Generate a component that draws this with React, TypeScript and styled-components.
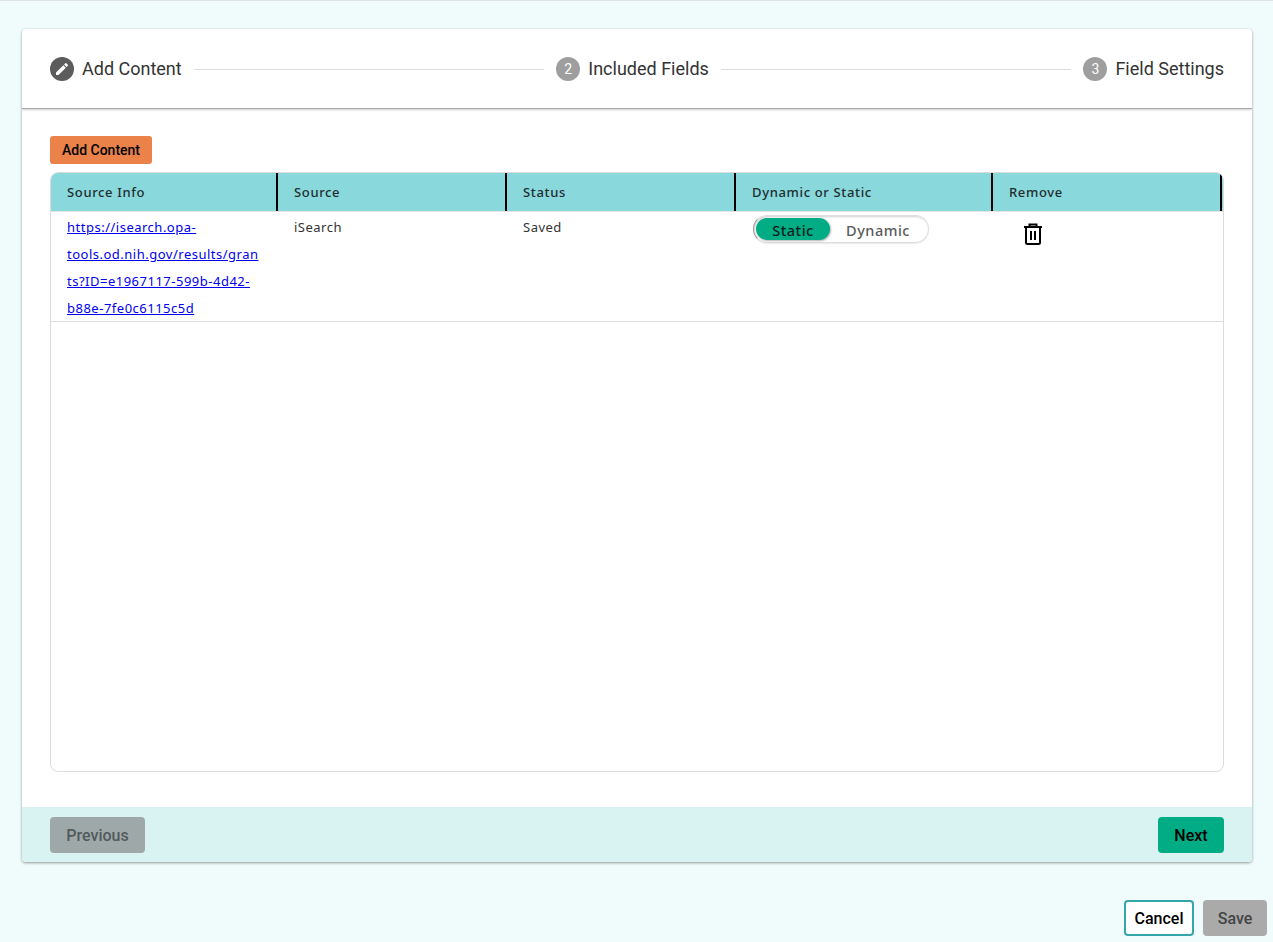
import React from "react";
import styled, { createGlobalStyle } from "styled-components";
import { MdEdit } from "react-icons/md";

const GlobalStyle = createGlobalStyle`
  html, body {
    margin: 0;
    padding: 0;
    background: #effcfb;
    font-family: Roboto, "Liberation Sans", sans-serif;
  }
  * {
    box-sizing: border-box;
  }
`;

const Page = styled.div`
  height: 942px;
  overflow: hidden;
  border-top: 1px solid #dfe5e5;
  padding: 28px 21px 0 22px;
`;

const Card = styled.div`
  height: 833px;
  background: #fff;
  border-radius: 4px;
  box-shadow: 0 1px 3px rgba(0, 0, 0, 0.4);
  display: flex;
  flex-direction: column;
  overflow: hidden;
`;

const Stepper = styled.div`
  height: 80px;
  flex: none;
  display: flex;
  align-items: center;
  padding: 0 28px;
  border-bottom: 1px solid #a9a9a9;
  box-shadow: 0 1px 2px rgba(0, 0, 0, 0.2);
`;

const Step = styled.div`
  display: flex;
  align-items: center;
  gap: 8px;
  font-size: 18px;
  color: #333;
  flex: none;
`;

const StepIcon = styled.span<{ $active?: boolean }>`
  width: 24px;
  height: 24px;
  border-radius: 50%;
  background: ${(p) => (p.$active ? "#5c5c5c" : "#9e9e9e")};
  color: #fff;
  font-size: 14px;
  display: flex;
  align-items: center;
  justify-content: center;
  margin-top: 1px;
`;

const StepLine = styled.div`
  flex: 1;
  height: 1px;
  background: #dedede;
  margin: 1px 12px 0;
`;

const Body = styled.div`
  flex: 1;
  padding: 27px 28px 35px;
  display: flex;
  flex-direction: column;
  gap: 8px;
`;

const AddButton = styled.button`
  align-self: flex-start;
  width: 102px;
  height: 28px;
  border: 0;
  border-radius: 3px;
  background: #ea8249;
  color: #000;
  font: 500 14px Roboto, sans-serif;
  padding: 0;
`;

const TableBox = styled.div`
  flex: 1;
  border: 1px solid #dcdcdc;
  border-radius: 8px;
  overflow: hidden;
  font-family: "Noto Sans", "Open Sans", sans-serif;
`;

const columns = "227px 229px 229px 257px 229px";

const HeadRow = styled.div`
  display: grid;
  grid-template-columns: ${columns};
  height: 38px;
  background: #89d8dc;
`;

const HeadCell = styled.div`
  border-right: 2px solid #000;
  padding: 0 16px 0 16px;
  display: flex;
  align-items: center;
  font-size: 13px;
  font-weight: 500;
  letter-spacing: 0.65px;
  color: #1f2d2e;
`;

const DataRow = styled.div`
  display: grid;
  grid-template-columns: ${columns};
  height: 111px;
  border-top: 1px solid #e4e4e4;
  border-bottom: 1px solid #dcdcdc;
  font-size: 13px;
  letter-spacing: 0.5px;
  color: #333;
`;

const DataCell = styled.div`
  padding: 2px 16px 0;
  line-height: 27px;
  overflow-wrap: anywhere;
`;

const SourceLink = styled.a`
  color: #0000ee;
  text-decoration: underline;
`;

const ToggleCell = styled(DataCell)`
  padding: 3px 17px 0;
`;

const Toggle = styled.div`
  width: 176px;
  height: 28px;
  border-radius: 14px;
  border: 1px solid #dedede;
  border-left-color: #9a9a9a;
  box-shadow: inset 1px 1px 2px rgba(0, 0, 0, 0.18), 0 1px 1px rgba(0, 0, 0, 0.08);
  padding: 2px;
  display: flex;
  font-size: 14.5px;
  font-weight: 500;
  line-height: 22px;
`;

const ToggleOption = styled.div<{ $on?: boolean }>`
  width: ${(p) => (p.$on ? "74px" : "96px")};
  text-align: center;
  border-radius: 11px;
  background: ${(p) => (p.$on ? "#00ac83" : "transparent")};
  color: ${(p) => (p.$on ? "#04211b" : "#5a5a5a")};
  box-shadow: ${(p) => (p.$on ? "1px 1px 2px rgba(0,0,0,0.3)" : "none")};
  padding-top: 1px;
`;

const RemoveCell = styled(DataCell)`
  padding: 11px 0 0 30px;
`;

const Footer = styled.div`
  height: 55px;
  flex: none;
  background: #d9f3f3;
  padding: 10px 28px 0;
  display: flex;
  justify-content: space-between;
  align-items: flex-start;
`;

const NavButton = styled.button<{ $primary?: boolean }>`
  width: ${(p) => (p.$primary ? "66px" : "95px")};
  height: 36px;
  border: 0;
  border-radius: 4px;
  padding: 0;
  background: ${(p) => (p.$primary ? "#00ac83" : "#9fa8a9")};
  color: ${(p) => (p.$primary ? "#000" : "#515b5c")};
  font: 500 16px Roboto, sans-serif;
`;

const Actions = styled.div`
  display: flex;
  justify-content: flex-end;
  gap: 9px;
  margin-top: 38px;
  margin-right: -15px;
`;

const CancelButton = styled.button`
  width: 70px;
  height: 36px;
  border: 2px solid #34a6aa;
  border-radius: 4px;
  background: #fff;
  color: #000;
  padding: 0;
  font: 500 16px Roboto, sans-serif;
`;

const SaveButton = styled.button`
  width: 64px;
  height: 36px;
  border: 0;
  border-radius: 4px;
  background: #aaaaaa;
  color: #444;
  padding: 0;
  font: 500 16px Roboto, sans-serif;
`;

const TrashIcon = () => (
  <svg width="20" height="22" viewBox="0 0 20 22" fill="none" stroke="#000" strokeWidth="2">
    <path d="M1 4h18" />
    <path d="M6.5 4V1.5h7V4" />
    <path d="M3 4v15.5a1.5 1.5 0 0 0 1.5 1.5h11a1.5 1.5 0 0 0 1.5-1.5V4" />
    <path d="M8 8v9M12 8v9" />
  </svg>
);

function App() {
  return (
    <Page>
      <GlobalStyle />
      <Card>
        <Stepper>
          <Step>
            <StepIcon $active>
              <MdEdit size={16} />
            </StepIcon>
            Add Content
          </Step>
          <StepLine />
          <Step>
            <StepIcon>2</StepIcon>
            Included Fields
          </Step>
          <StepLine />
          <Step>
            <StepIcon>3</StepIcon>
            Field Settings
          </Step>
        </Stepper>
        <Body>
          <AddButton>Add Content</AddButton>
          <TableBox>
            <HeadRow>
              <HeadCell>Source Info</HeadCell>
              <HeadCell>Source</HeadCell>
              <HeadCell>Status</HeadCell>
              <HeadCell>Dynamic or Static</HeadCell>
              <HeadCell>Remove</HeadCell>
            </HeadRow>
            <DataRow>
              <DataCell>
                <SourceLink href="#">
                  https://isearch.opa-tools.od.nih.gov/results/grants?ID=e1967117-599b-4d42-b88e-7fe0c6115c5d
                </SourceLink>
              </DataCell>
              <DataCell>iSearch</DataCell>
              <DataCell>Saved</DataCell>
              <ToggleCell>
                <Toggle>
                  <ToggleOption $on>Static</ToggleOption>
                  <ToggleOption>Dynamic</ToggleOption>
                </Toggle>
              </ToggleCell>
              <RemoveCell>
                <TrashIcon />
              </RemoveCell>
            </DataRow>
          </TableBox>
        </Body>
        <Footer>
          <NavButton>Previous</NavButton>
          <NavButton $primary>Next</NavButton>
        </Footer>
      </Card>
      <Actions>
        <CancelButton>Cancel</CancelButton>
        <SaveButton>Save</SaveButton>
      </Actions>
    </Page>
  );
}

export default App;
